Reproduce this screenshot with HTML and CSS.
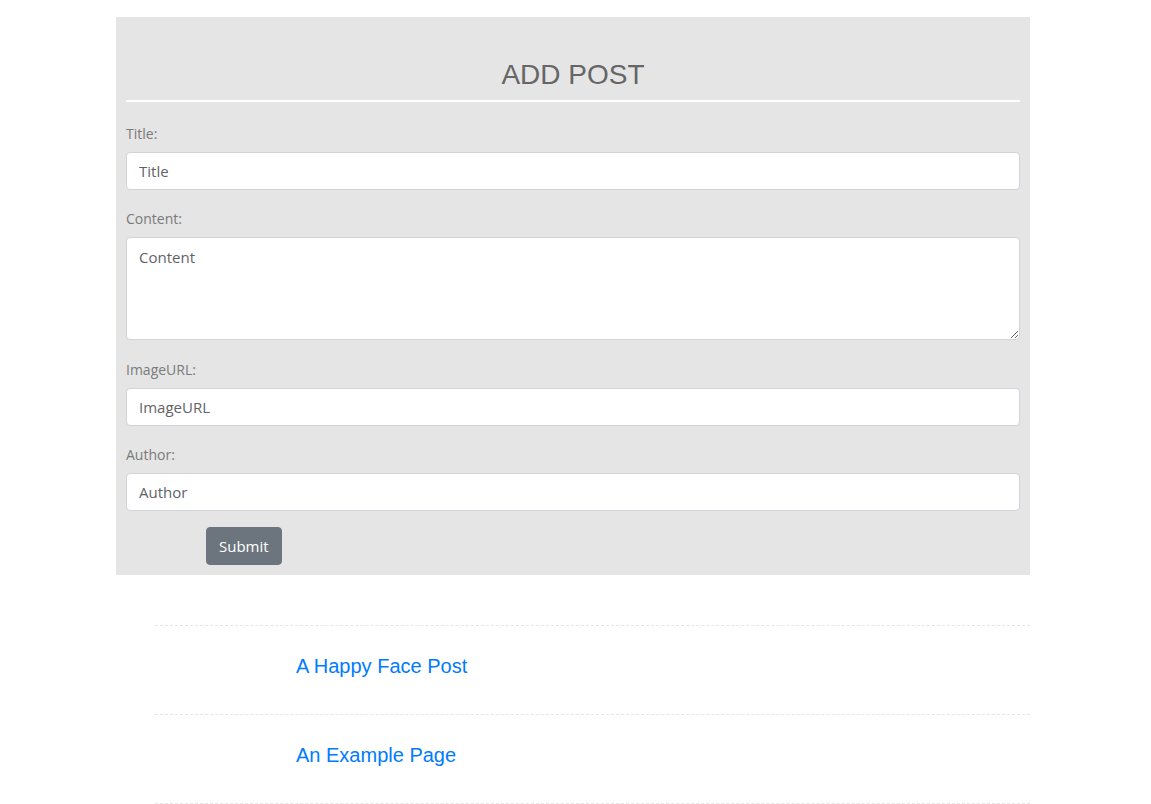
FILE: index.html
```html
<!DOCTYPE html>
<html>
<head>
<meta charset="utf-8">
<title>Add Post</title>
<link rel="stylesheet" href="styles.css">
</head>
<body>
<div class="page">
  <section class="panel">
    <h3 class="panel-title">ADD POST</h3>
    <hr class="panel-rule">
    <form class="post-form">
      <div class="field">
        <label class="field-label">Title:</label>
        <input class="field-input" type="text" placeholder="Title">
      </div>
      <div class="field field-tall">
        <label class="field-label">Content:</label>
        <textarea class="field-input field-area" placeholder="Content"></textarea>
      </div>
      <div class="field">
        <label class="field-label">ImageURL:</label>
        <input class="field-input" type="text" placeholder="ImageURL">
      </div>
      <div class="field">
        <label class="field-label">Author:</label>
        <input class="field-input" type="text" placeholder="Author">
      </div>
      <div class="actions">
        <button class="submit-btn" type="button">Submit</button>
      </div>
    </form>
  </section>
  <ul class="post-list">
    <li class="post-item"><a class="post-link" href="#">A Happy Face Post</a></li>
    <li class="post-item"><a class="post-link" href="#">An Example Page</a></li>
    <li class="post-item"></li>
  </ul>
</div>
</body>
</html>
```

FILE: styles.css
```css
html, body {
  margin: 0;
  padding: 0;
  background: #fff;
}
body {
  font-family: "Open Sans", "Noto Sans", sans-serif;
}
.page {
  padding-top: 17px;
  margin-left: 116px;
  width: 914px;
}
.panel {
  background: #e5e5e5;
  padding: 10px 10px 10px;
}
.panel-title {
  margin: 31px 0 8px;
  font-family: "Liberation Sans", Arial, sans-serif;
  font-weight: 400;
  font-size: 28px;
  line-height: 1.2;
  color: #666;
  text-align: center;
}
.panel-rule {
  margin: 0 0 21px;
  border: 0;
  height: 2px;
  background: #fff;
}
.post-form {
  display: flex;
  flex-direction: column;
}
.field {
  display: flex;
  flex-direction: column;
  margin-bottom: 18px;
}
.field-tall {
  margin-bottom: 19px;
}
.field-label {
  display: block;
  font-size: 14px;
  font-weight: 400;
  line-height: 21px;
  color: #7a7a7a;
  margin-bottom: 8px;
}
.field-input {
  box-sizing: border-box;
  height: 38px;
  width: 100%;
  margin: 0;
  padding: 6px 12px;
  border: 1px solid #ced4da;
  border-radius: 4px;
  background: #fff;
  font-family: "Open Sans", "Noto Sans", sans-serif;
  font-size: 15px;
  color: #495057;
  outline: none;
}
.field-input::placeholder {
  color: #5f6368;
  opacity: 1;
}
.field-area {
  height: 103px;
  padding-top: 9px;
  resize: vertical;
  display: block;
}
.actions {
  margin-top: -2px;
  padding-left: 80px;
}
.submit-btn {
  height: 38px;
  padding: 0 12px;
  border: 1px solid #6c757d;
  border-radius: 4px;
  background: #6c757d;
  color: #fff;
  font-family: "Open Sans", "Noto Sans", sans-serif;
  font-size: 15px;
  cursor: pointer;
}
.post-list {
  list-style: none;
  margin: 50px 0 0 39px;
  padding: 0;
}
.post-item {
  border-top: 1px dashed #e6e6e6;
  padding: 25px 0 33px 141px;
  height: 30px;
}
.post-item:last-child {
  height: 0;
  padding: 0;
}
.post-link {
  font-family: "Liberation Sans", Arial, sans-serif;
  font-size: 20px;
  line-height: 30px;
  color: #007bff;
  text-decoration: none;
}
```
